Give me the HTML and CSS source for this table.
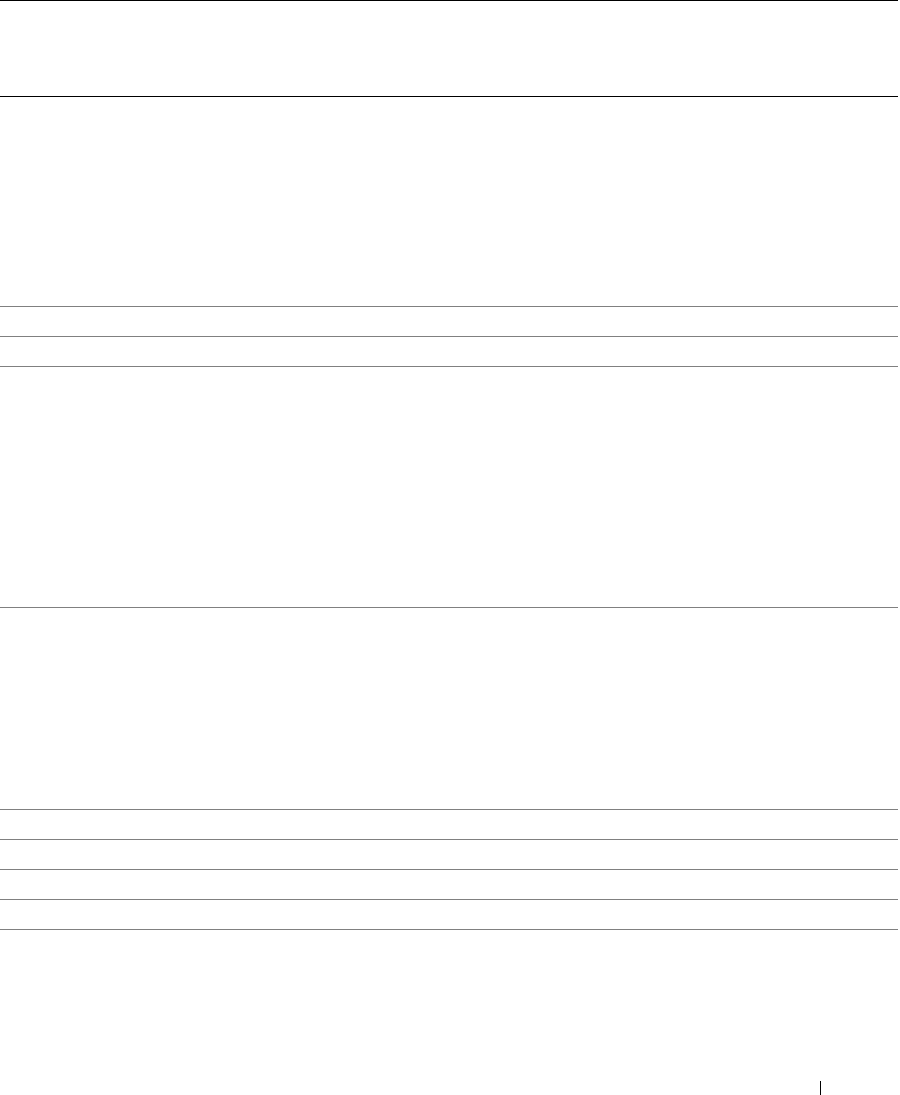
FILE: index.html
```html
<!DOCTYPE html>
<html lang="en">
<head>
<meta charset="utf-8">
<title>Table</title>
<link rel="stylesheet" href="styles.css">
</head>
<body>
<div class="page">
  <div class="table">
    <div class="head"></div>
    <div class="row r209"></div>
    <div class="row r30"></div>
    <div class="row r30"></div>
    <div class="row r241"></div>
    <div class="row r202"></div>
    <div class="row r30"></div>
    <div class="row r30"></div>
    <div class="row r30"></div>
    <div class="row r30"></div>
  </div>
  <div class="footer">
    <span class="sep"></span>
  </div>
</div>
</body>
</html>
```

FILE: styles.css
```css
html, body {
  margin: 0;
  padding: 0;
  background: #ffffff;
  font-family: "Liberation Sans", Arial, sans-serif;
}
.page {
  width: 900px;
  height: 1095px;
  display: flex;
  flex-direction: column;
  overflow: hidden;
}
.table {
  width: 898px;
  display: flex;
  flex-direction: column;
}
.head {
  height: 95px;
  border-top: 1px solid #000000;
  border-bottom: 1px solid #000000;
}
.row {
  border-bottom: 1px solid #808080;
}
.r209 { height: 209px; }
.r30 { height: 29px; }
.r241 { height: 240px; }
.r202 { height: 201px; }
.footer {
  flex: 1;
  display: flex;
  justify-content: flex-start;
  align-items: flex-end;
  padding-left: 820px;
}
.sep {
  display: block;
  width: 1px;
  height: 14px;
  background: #000000;
}
```
